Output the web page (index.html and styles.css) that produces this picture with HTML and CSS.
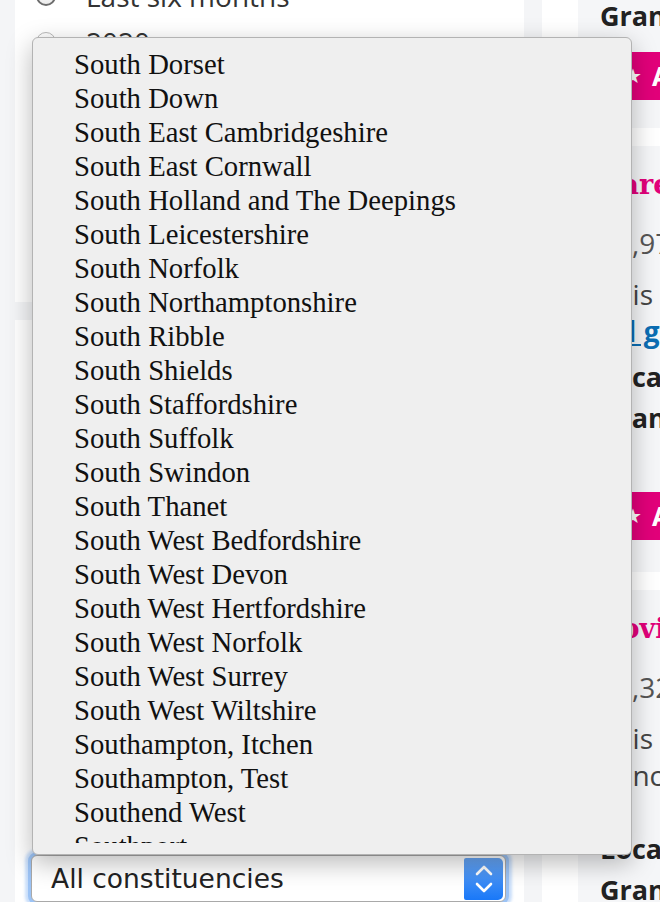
FILE: index.html
```html
<!DOCTYPE html>
<html lang="en">
<head>
<meta charset="utf-8">
<title>Grants search</title>
<link rel="stylesheet" href="styles.css">
</head>
<body>
<div class="page">
  <div class="left">
    <section class="card card-dates">
      <label class="radio"><span class="dot dot-on"></span>Last six months</label>
      <label class="radio"><span class="dot"></span>2020</label>
      <label class="radio"><span class="dot"></span>2019</label>
      <label class="radio"><span class="dot"></span>2018</label>
      <label class="radio"><span class="dot"></span>Custom range</label>
    </section>
    <section class="card card-places">
      <h3 class="card-title">Parliamentary constituency</h3>
      <div class="select">
        <span class="select-value">All constituencies</span>
        <span class="stepper">
          <svg width="22" height="34" viewBox="0 0 22 34"><path d="M4 12 L11 5 L18 12" fill="none" stroke="#fff" stroke-width="2.6" stroke-linecap="round" stroke-linejoin="round"/><path d="M4 22 L11 29 L18 22" fill="none" stroke="#fff" stroke-width="2.6" stroke-linecap="round" stroke-linejoin="round"/></svg>
        </span>
      </div>
    </section>
  </div>
  <div class="right">
    <article class="grant grant-first">
      <div class="meta">
        <div class="meta-line">Grant programme: Community Response</div>
      </div>
      <a class="btn"><span class="star">★</span>Add to shortlist</a>
    </article>
    <article class="grant">
      <h2 class="grant-title">Carers Support Fund</h2>
      <div class="amount">£1,975 · 14 Apr 2020</div>
      <p class="desc"><span class="line">This grant will support carers in the area</span><a class="line link">All grants to this recipient</a></p>
      <div class="meta">
        <div class="meta-line">Local authority: South Norfolk</div>
        <div class="meta-line">Grant programme: Main Grants</div>
      </div>
      <a class="btn"><span class="star">★</span>Add to shortlist</a>
    </article>
    <article class="grant">
      <h2 class="grant-title">Covid-19 Emergency Fund</h2>
      <div class="amount">£4,320 · 02 May 2020</div>
      <p class="desc desc-short"><span class="line">This funding will help the charity to</span><span class="line">t. Included costs are staff and rent</span></p>
      <div class="meta">
        <div class="meta-line">Local authority: South Somerset</div>
        <div class="meta-line">Grant programme: Emergency</div>
      </div>
    </article>
  </div>
</div>

<div class="menu">
  <ul class="menu-list">
    <li>South Dorset</li>
    <li>South Down</li>
    <li>South East Cambridgeshire</li>
    <li>South East Cornwall</li>
    <li>South Holland and The Deepings</li>
    <li>South Leicestershire</li>
    <li>South Norfolk</li>
    <li>South Northamptonshire</li>
    <li>South Ribble</li>
    <li>South Shields</li>
    <li>South Staffordshire</li>
    <li>South Suffolk</li>
    <li>South Swindon</li>
    <li>South Thanet</li>
    <li>South West Bedfordshire</li>
    <li>South West Devon</li>
    <li>South West Hertfordshire</li>
    <li>South West Norfolk</li>
    <li>South West Surrey</li>
    <li>South West Wiltshire</li>
    <li>Southampton, Itchen</li>
    <li>Southampton, Test</li>
    <li>Southend West</li>
    <li>Southport</li>
    <li>Spelthorne</li>
  </ul>
</div>
</body>
</html>
```

FILE: styles.css
```css
html, body {
  margin: 0;
  height: 902px;
  overflow: hidden;
  background: #f4f5f7;
}

.page {
  display: flex;
  align-items: flex-start;
  gap: 18px;
  padding-left: 15px;
  margin-top: -40px;
  font-family: "Open Sans", "Liberation Sans", sans-serif;
  color: #333;
}

.left {
  width: 509px;
  flex: none;
  display: flex;
  flex-direction: column;
  gap: 18px;
}

.card {
  background: #fff;
  box-sizing: border-box;
}

.card-dates {
  height: 342px;
  padding: 13px 0 0 21px;
}

.radio {
  display: flex;
  align-items: center;
  gap: 30px;
  height: 46px;
  font-size: 28px;
  color: #333;
}

.dot {
  width: 18px;
  height: 18px;
  border-radius: 50%;
  border: 1px solid #b9b9b9;
  background: linear-gradient(#ffffff, #ececec);
  flex: none;
}

.dot-on {
  border: 2px solid #6d6d6d;
  width: 16px;
  height: 16px;
}

.card-places {
  height: 620px;
  padding: 0 0 38px 16px;
  display: flex;
  flex-direction: column;
  justify-content: flex-end;
}

.card-title {
  margin: 0 0 30px;
  font-size: 24px;
}

.select {
  width: 475px;
  height: 47px;
  box-sizing: border-box;
  border: 1px solid #a9a9a9;
  border-radius: 6px;
  background: #fff;
  display: flex;
  align-items: center;
  justify-content: space-between;
  padding: 0 2px 0 19px;
  box-shadow: 0 0 0 3px #9cc3f5, 0 0 3px 6px rgba(156, 195, 245, 0.55);
}

.select-value {
  font-family: "DejaVu Sans", sans-serif;
  font-size: 26.5px;
  color: #222;
}

.stepper {
  width: 39px;
  height: 42px;
  border-radius: 2px 5px 5px 2px;
  background: linear-gradient(#68a6f4, #1978f8);
  display: flex;
  align-items: center;
  justify-content: center;
}

.right {
  width: 560px;
  flex: none;
  background: #fff;
  padding-left: 36px;
  display: flex;
  flex-direction: column;
  gap: 18px;
}

.grant {
  background: #f5f6f8;
  padding: 20px 0 32px 22px;
}

.grant-first {
  padding-top: 35px;
  padding-bottom: 28px;
}

.grant-title {
  margin: 0;
  font-family: "DejaVu Serif", serif;
  font-weight: bold;
  font-size: 27px;
  line-height: 38px;
  color: #e2007a;
  white-space: nowrap;
}

.amount {
  margin-top: 20px;
  font-size: 28px;
  line-height: 38px;
  color: #555;
  white-space: nowrap;
}

.desc {
  margin: 14px 0 0;
  font-size: 28px;
  line-height: 37px;
  color: #444;
}

.desc .line {
  display: block;
  white-space: nowrap;
}

.desc .link {
  color: #0b6db3;
  font-weight: bold;
  text-decoration: underline;
}

.meta {
  margin-top: 6px;
  font-size: 27px;
  font-weight: bold;
  line-height: 41px;
  color: #222;
  white-space: nowrap;
}

.grant-first .meta {
  margin-top: 0;
}

.desc-short + .meta {
  margin-top: 34px;
}

.btn {
  display: flex;
  align-items: center;
  gap: 10px;
  margin-top: 54px;
  height: 48px;
  width: 320px;
  padding-left: 24px;
  background: #e2007a;
  color: #fff;
  font-size: 26px;
  font-weight: bold;
  white-space: nowrap;
}

.grant-first .btn {
  margin-top: 16px;
}

.star {
  font-family: "DejaVu Sans", sans-serif;
  font-size: 20px;
}

.menu {
  position: absolute;
  left: 32px;
  top: 37px;
  width: 600px;
  height: 818px;
  box-sizing: border-box;
  background: #efefef;
  border: 1px solid #b3b3b3;
  border-radius: 6px;
  box-shadow: 0 8px 26px rgba(0, 0, 0, 0.28);
  padding: 9px 0 11px;
}

.menu-list {
  list-style: none;
  margin: 0;
  padding: 0 0 0 41px;
  height: 796px;
  overflow: hidden;
  font-family: "Liberation Serif", "Times New Roman", serif;
  font-size: 28.7px;
  line-height: 34px;
  color: #111;
}

.menu-list li {
  height: 34px;
  white-space: nowrap;
}
```
